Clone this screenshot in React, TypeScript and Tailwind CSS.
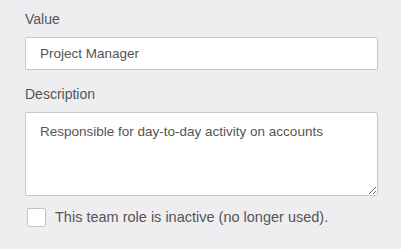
import React from "react";

export default function App() {
  return (
    <div
      className="w-[401px] h-[249px] bg-[#eeeef0] pl-[25px] pr-[23px] pt-[9px] text-[#555555]"
      style={{ fontFamily: '"Liberation Sans", Arial, sans-serif' }}
    >
      <div className="text-[14px] leading-[20px]">Value</div>
      <input
        readOnly
        value="Project Manager"
        className="mt-[8px] block w-full h-[33px] bg-white border border-[#c8c8c8] rounded-[2px] pl-[14px] text-[13.5px] text-[#555555] outline-none"
        style={{ fontFamily: '"Liberation Sans", Arial, sans-serif' }}
      />
      <div className="mt-[14px] text-[14px] leading-[20px]">Description</div>
      <textarea
        readOnly
        value="Responsible for day-to-day activity on accounts"
        className="mt-[8px] block w-full h-[84px] bg-white border border-[#c8c8c8] rounded-[2px] pl-[14px] pt-[10px] text-[13.5px] leading-[18px] text-[#555555] outline-none resize-y"
        style={{ fontFamily: '"Liberation Sans", Arial, sans-serif' }}
      />
      <div className="mt-[12px] flex items-center pl-[2px]">
        <span className="w-[19px] h-[19px] bg-white border border-[#c4c4c4] rounded-[2px] shrink-0" />
        <span className="ml-[9px] text-[14.5px] leading-[19px]">
          This team role is inactive (no longer used).
        </span>
      </div>
    </div>
  );
}
